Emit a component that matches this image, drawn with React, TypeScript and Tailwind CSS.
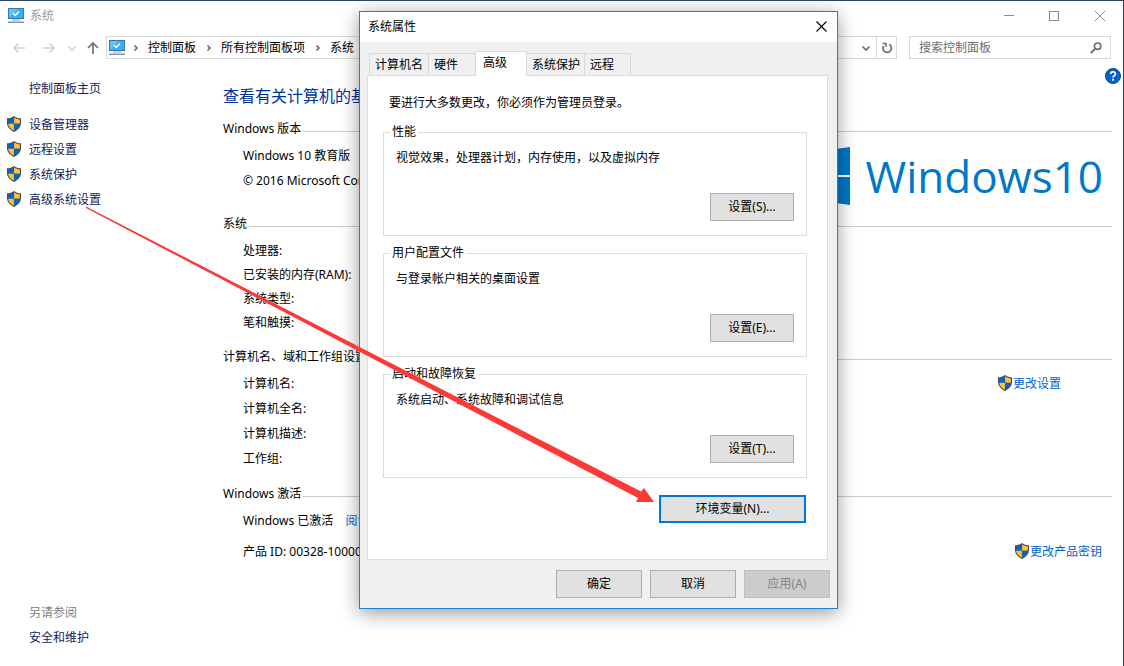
import React from 'react';

const tasks = ['设备管理器', '远程设置', '系统保护', '高级系统设置'];

const crumbs = ['控制面板', '所有控制面板项', '系统'];

const tabs = [
  { label: '计算机名', width: 'w-[60px]' },
  { label: '硬件', width: 'w-12' },
  { label: '高级', width: 'w-[52px]', active: true },
  { label: '系统保护', width: 'w-[59px]' },
  { label: '远程', width: 'w-[47px]' },
];

const groups = [
  { title: '性能', text: '视觉效果，处理器计划，内存使用，以及虚拟内存', button: '设置(S)...' },
  { title: '用户配置文件', text: '与登录帐户相关的桌面设置', button: '设置(E)...' },
  { title: '启动和故障恢复', text: '系统启动、系统故障和调试信息', button: '设置(T)...' },
];

function Shield() {
  return (
    <svg width="14" height="16" viewBox="0 0 14 16" className="mb-[2px] shrink-0" aria-hidden="true">
      <path d="M7 0 C5 1.6 2.6 2.3 0 2.3 V7 C0 11 3 14 7 16 C11 14 14 11 14 7 V2.3 C11.4 2.3 9 1.6 7 0Z" fill="#4a4a4a" />
      <path d="M6.9 1.3 C5 2.7 3 3.3 1.1 3.4 V7.8 H6.9Z" fill="#0a64c8" />
      <path d="M7.1 1.3 C9 2.7 11 3.3 12.9 3.4 V7.8 H7.1Z" fill="#ffc03c" />
      <path d="M1.1 7.8 C1.4 11 3.8 13.2 6.9 14.8 V7.8Z" fill="#ffc03c" />
      <path d="M12.9 7.8 C12.6 11 10.2 13.2 7.1 14.8 V7.8Z" fill="#0a64c8" />
    </svg>
  );
}

function ComputerIcon() {
  return (
    <svg width="16" height="16" viewBox="0 0 16 16" className="shrink-0" aria-hidden="true">
      <rect x="0.5" y="0.5" width="15" height="10" fill="#33b1f4" stroke="#3d77a3" />
      <path d="M1 10 L10 1 H1Z" fill="#5ac3fa" />
      <path d="M5 5.2 L7.2 7.4 L11 3.4" fill="none" stroke="#fff" strokeWidth="1.5" />
      <rect x="4" y="11.5" width="8" height="1" fill="#8fa6b8" />
      <rect x="0" y="13.5" width="16" height="1.5" fill="#8296aa" />
    </svg>
  );
}

function Chevron({ down = false, color = '#6b6b6b' }: { down?: boolean; color?: string }) {
  return (
    <svg width="10" height="10" viewBox="0 0 10 10" className="shrink-0" aria-hidden="true">
      <path d={down ? 'M1.5 3.5 L5 7 L8.5 3.5' : 'M3.5 2.5 L6 5 L3.5 7.5'} fill="none" stroke={color} strokeWidth="1.7" />
    </svg>
  );
}

function Arrow({ d, color }: { d: string; color: string }) {
  return (
    <svg width="14" height="14" viewBox="0 0 14 14" aria-hidden="true">
      <path d={d} fill="none" stroke={color} strokeWidth="1.7" />
    </svg>
  );
}

function SectionTitle({ children }: { children: React.ReactNode }) {
  return (
    <div className="mb-1 flex h-[21px] items-end gap-[2px]">
      <h2 className="leading-5">{children}</h2>
      <hr className="mb-[7px] flex-1 border-t border-[#cbcbcb]" />
    </div>
  );
}

function TitleBar() {
  return (
    <header className="flex h-[30px] items-center pl-2">
      <ComputerIcon />
      <span className="ml-[6px] flex-1 text-[#999]">系统</span>
      <button aria-label="最小化" className="flex h-full w-[45px] items-center justify-center">
        <svg width="10" height="10" viewBox="0 0 10 10"><path d="M0 4.5 H10" stroke="#8c8c8c" /></svg>
      </button>
      <button aria-label="最大化" className="flex h-full w-[46px] items-center justify-center">
        <svg width="10" height="10" viewBox="0 0 10 10"><rect x="0.5" y="0.5" width="9" height="9" fill="none" stroke="#8c8c8c" /></svg>
      </button>
      <button aria-label="关闭" className="flex h-full w-[46px] items-center justify-center">
        <svg width="10" height="10" viewBox="0 0 10 10"><path d="M0 0 L10 10 M10 0 L0 10" stroke="#8c8c8c" /></svg>
      </button>
    </header>
  );
}

function NavBar() {
  return (
    <div className="flex items-center py-[5px] pr-3 pl-3">
      <button aria-label="后退" className="w-[30px]"><Arrow d="M13 7 H2 M6.5 2.5 L2 7 L6.5 11.5" color="#d2d2d2" /></button>
      <button aria-label="前进" className="w-[25px]"><Arrow d="M1 7 H12 M7.5 2.5 L12 7 L7.5 11.5" color="#d2d2d2" /></button>
      <button aria-label="最近位置" className="w-[19px]"><Chevron down color="#d2d2d2" /></button>
      <button aria-label="上移" className="w-5"><Arrow d="M7 13 V2 M2 7 L7 2 L12 7" color="#707070" /></button>
      <div className="flex h-[23px] flex-1 items-center border border-[#d9d9d9] pl-[2px]">
        <ComputerIcon />
        <nav aria-label="地址" className="-ml-[2px] flex flex-1 items-center whitespace-nowrap">
          {crumbs.map((crumb) => (
            <React.Fragment key={crumb}>
              <span className="flex w-[25px] justify-center"><Chevron /></span>
              <a href="#" className="text-black">{crumb}</a>
            </React.Fragment>
          ))}
        </nav>
        <button aria-label="展开地址" className="flex w-5 justify-center"><Chevron down /></button>
        <button aria-label="刷新" className="flex h-full w-5 items-center justify-center border-l border-[#d9d9d9]">
          <svg width="12" height="12" viewBox="0 0 12 12">
            <path d="M8.3 2.6 A4.2 4.2 0 1 1 2.6 4" fill="none" stroke="#6b6b6b" strokeWidth="1.7" />
            <path d="M1.6 1.4 H5 V5" fill="none" stroke="#6b6b6b" strokeWidth="1.5" />
          </svg>
        </button>
      </div>
      <label className="ml-3 flex h-[23px] w-[202px] items-center border border-[#d9d9d9] pr-2 pl-[9px]">
        <input
          type="text"
          aria-label="搜索控制面板"
          placeholder="搜索控制面板"
          className="min-w-0 flex-1 outline-none placeholder:text-[#6d6d6d]"
        />
        <svg width="12" height="12" viewBox="0 0 12 12" aria-hidden="true">
          <circle cx="7.6" cy="4.2" r="3.2" fill="none" stroke="#6b6b6b" strokeWidth="1.6" />
          <path d="M5.2 6.6 L0.8 11" stroke="#6b6b6b" strokeWidth="1.9" />
        </svg>
      </label>
    </div>
  );
}

function Sidebar() {
  return (
    <aside className="flex w-[223px] shrink-0 flex-col pt-3 pb-4 pl-[7px] leading-[25px] text-[#151c55]">
      <a href="#" className="mb-[11px] pl-[22px]">控制面板主页</a>
      <ul>
        {tasks.map((task) => (
          <li key={task}>
            <a href="#" className="flex items-center gap-2"><Shield />{task}</a>
          </li>
        ))}
      </ul>
      <p className="mt-auto pl-[22px] text-[#808080]">另请参阅</p>
      <a href="#" className="pl-[22px]">安全和维护</a>
    </aside>
  );
}

function SystemInfo() {
  return (
    <main className="min-w-0 flex-1 pt-1 whitespace-nowrap">
      <div className="flex h-4 justify-end pr-[2px]">
        <button aria-label="帮助">
          <svg width="16" height="16" viewBox="0 0 16 16">
            <circle cx="8" cy="8" r="7.5" fill="#0863c6" stroke="#0a4384" />
            <path d="M5.7 6.1 C5.7 3.2 10.4 3.2 10.4 5.9 C10.4 7.5 8 7.7 8 9.6" fill="none" stroke="#fff" strokeWidth="1.7" />
            <rect x="7.1" y="10.8" width="1.9" height="1.9" fill="#fff" />
          </svg>
        </button>
      </div>
      <h1 className="mb-[10px] text-base leading-6 text-[#003399]">查看有关计算机的基本信息</h1>

      <div className="pr-[11px] leading-[25px]">
        <section>
          <SectionTitle>Windows 版本</SectionTitle>
          <div className="flex h-[70px] justify-between pr-[9px] pl-5">
            <div>
              <p>Windows 10 教育版</p>
              <p>© 2016 Microsoft Corporation</p>
            </div>
            <div className="flex items-start pt-1 text-[#0078c9]">
              <svg width="58" height="58" viewBox="0 0 58 58" fill="currentColor" aria-hidden="true">
                <path d="M0 8 L25 4.5 V28 H0Z M27 4.2 L58 0 V28 H27Z M0 30 H25 V53.5 L0 50Z M27 30 H58 V58 L27 53.8Z" />
              </svg>
              <span className="ml-4 font-['Open_Sans'] text-[44px] leading-[58px]">Windows</span>
              <span className="font-['Open_Sans'] text-[44px] leading-[58px]">10</span>
            </div>
          </div>
        </section>

        <section className="mb-[11px]">
          <SectionTitle>系统</SectionTitle>
          <div className="pt-px pl-5 leading-6">
            <p>处理器:</p>
            <p>已安装的内存(RAM):</p>
            <p>系统类型:</p>
            <p>笔和触摸:</p>
          </div>
        </section>

        <section className="mb-3">
          <SectionTitle>计算机名、域和工作组设置</SectionTitle>
          <div className="flex items-start justify-between pr-[51px] pl-5">
            <div>
              <p>计算机名:</p>
              <p>计算机全名:</p>
              <p>计算机描述:</p>
              <p>工作组:</p>
            </div>
            <a href="#" className="flex items-center gap-px text-[#0066cc]"><Shield />更改设置</a>
          </div>
        </section>

        <section>
          <SectionTitle>Windows 激活</SectionTitle>
          <div className="pr-[10px] pl-5">
            <p className="mb-[6px]">
              Windows 已激活
              <a href="#" className="ml-3 text-[#0066cc]">阅读 Microsoft 软件许可条款</a>
            </p>
            <div className="flex justify-between">
              <p>产品 ID: 00328-10000</p>
              <a href="#" className="flex items-center gap-px text-[#0066cc]"><Shield />更改产品密钥</a>
            </div>
          </div>
        </section>
      </div>
    </main>
  );
}

function PropertiesDialog() {
  return (
    <div
      role="dialog"
      aria-label="系统属性"
      className="absolute top-[10px] left-[359px] w-[479px] border border-[#1883d7] bg-[#f0f0f0] shadow-[0_4px_18px_rgba(0,0,0,0.4)]"
    >
      <div className="flex h-[30px] items-center justify-between bg-white pr-[10px] pl-2">
        <span>系统属性</span>
        <button aria-label="关闭" className="pb-[2px]">
          <svg width="11" height="11" viewBox="0 0 11 11"><path d="M0.5 0.5 L10.5 10.5 M10.5 0.5 L0.5 10.5" stroke="#000" strokeWidth="1.1" /></svg>
        </button>
      </div>

      <div className="pt-[9px] pr-[9px] pb-[10px] pl-[7px]">
        <div role="tablist" className="flex h-6 items-end pl-[2px]">
          {tabs.map((tab) => (
            <button
              key={tab.label}
              role="tab"
              aria-selected={!!tab.active}
              className={`-mr-px border border-b-0 border-[#d9d9d9] text-left ${tab.width} ${
                tab.active ? 'relative -mb-px h-[25px] bg-white pb-[3px] pl-[7px]' : 'h-[22px] bg-[#f0f0f0] pl-[5px]'
              }`}
            >
              {tab.label}
            </button>
          ))}
        </div>

        <div role="tabpanel" className="border border-[#dcdcdc] bg-white pt-[17px] pr-5 pb-9 pl-[15px] leading-5">
          <p className="mb-[11px] pl-[6px]">要进行大多数更改，你必须作为管理员登录。</p>
          <div className="flex flex-col gap-[9px]">
            {groups.map((group) => (
              <fieldset key={group.title} className="border border-[#dcdcdc] pr-3 pb-[14px] pl-[6px]">
                <legend className="px-[2px] leading-4">{group.title}</legend>
                <p className="mt-2 mb-[25px] pl-[6px]">{group.text}</p>
                <button className="ml-auto block h-7 w-[84px] border border-[#adadad] bg-[#e1e1e1]">{group.button}</button>
              </fieldset>
            ))}
          </div>
          <button className="mt-[17px] mr-px ml-auto block h-7 w-[147px] border-2 border-[#0078d7] bg-[#e1e1e1]">
            环境变量(N)...
          </button>
        </div>

        <div className="-mr-[2px] mt-[10px] flex justify-end gap-2">
          <button className="h-7 w-[86px] border border-[#adadad] bg-[#e1e1e1]">确定</button>
          <button className="h-7 w-[86px] border border-[#adadad] bg-[#e1e1e1]">取消</button>
          <button disabled className="h-7 w-[86px] border border-[#bfbfbf] bg-[#cccccc] text-[#838383]">应用(A)</button>
        </div>
      </div>
    </div>
  );
}

export default function App() {
  return (
    <div
      lang="zh-CN"
      className="relative flex min-h-screen flex-col overflow-hidden border-t border-r border-[#2b4460] bg-white font-['Noto_Sans','Noto_Sans_CJK_SC',sans-serif] text-xs text-black"
    >
      <TitleBar />
      <NavBar />
      <div className="flex flex-1">
        <Sidebar />
        <SystemInfo />
      </div>

      <PropertiesDialog />

      {/* pointer from the sidebar link to the environment variables button */}
      <svg
        width="660"
        height="510"
        viewBox="0 0 660 510"
        className="pointer-events-none absolute top-0 left-0"
        aria-hidden="true"
      >
        <path d="M86 205.5 L641 490.5 L644 487 L654 501 L636 501 L638 497 L86 207Z" fill="#fb3a38" />
      </svg>
    </div>
  );
}
